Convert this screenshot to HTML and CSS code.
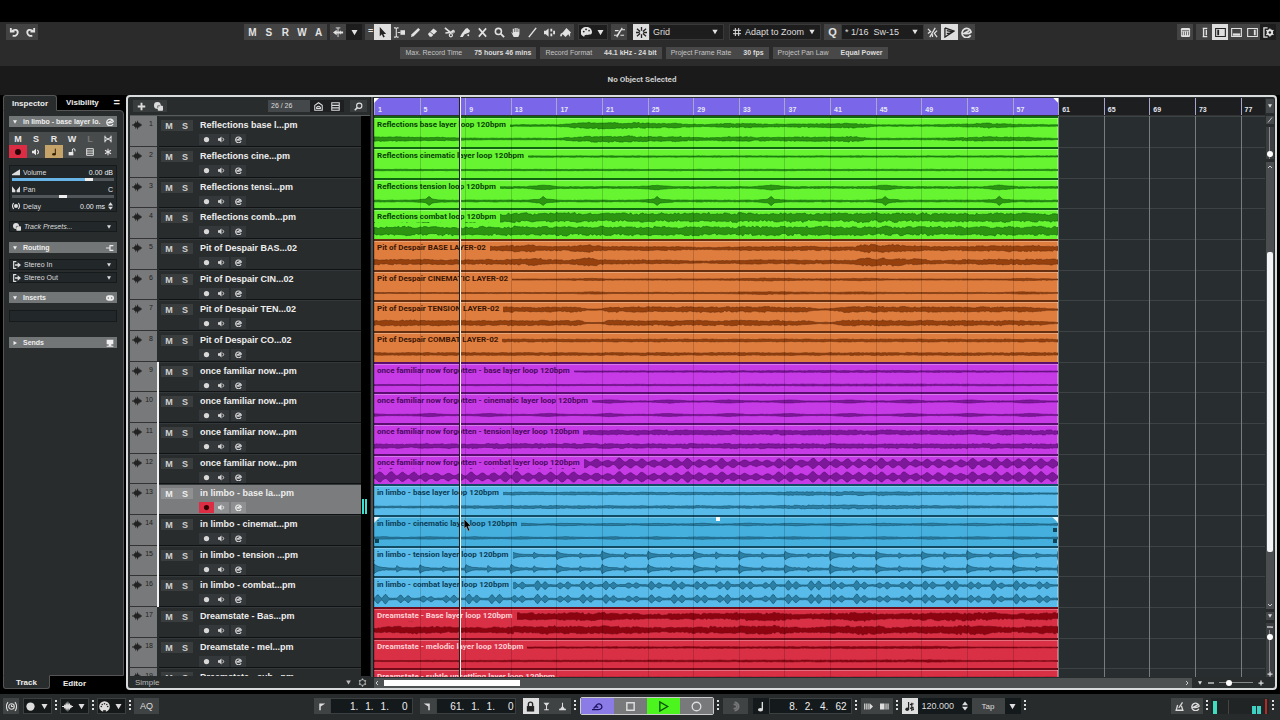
FILE: index.html
```html
<!DOCTYPE html>
<html lang="en">
<head>
<meta charset="utf-8">
<title>Project</title>
<link rel="stylesheet" href="styles.css">
</head>
<body>
<svg class="defs" aria-hidden="true">
  <symbol id="undo" viewBox="0 0 12 12"><path d="M2 1v4h4" fill="none" stroke="currentColor" stroke-width="2"/><path d="M3 4.500C6 2 10 3 9.500 6.500 9 9.500 6 10 4 9.500" fill="none" stroke="currentColor" stroke-width="2"/></symbol>
  <symbol id="redo" viewBox="0 0 12 12"><path d="M10 1v4H6" fill="none" stroke="currentColor" stroke-width="2"/><path d="M9 4.500C6 2 2 3 2.500 6.500 3 9.500 6 10 8 9.500" fill="none" stroke="currentColor" stroke-width="2"/></symbol>
  <symbol id="follow" viewBox="0 0 12 12"><path d="M0 6l4-3v2h7v2H4v2z"/><path d="M3 1h5M5.500 1v10M8 4v4" fill="none" stroke="currentColor"/></symbol>
  <symbol id="down" viewBox="0 0 12 12"><path d="M2 2.500h8L6 9.500z"/></symbol>
  <symbol id="right" viewBox="0 0 12 12"><path d="M3 2v8l7-4z"/></symbol>
  <symbol id="arrow" viewBox="0 0 12 12"><path d="M3 0v10l2.300-2 1.500 3.500 1.700-.8L7 7.500h3z"/></symbol>
  <symbol id="range" viewBox="0 0 12 12"><path d="M0 1h1.500l1 .8 1-.8H5M2.500 2v8M0 11h1.500l1-.8 1 .8H5" fill="none" stroke="currentColor" stroke-width="1.200"/><path d="M7 3.500h5v5H7z"/><path d="M4 6h3" stroke="currentColor"/></symbol>
  <symbol id="pencil" viewBox="0 0 12 12"><path d="M1 11l.8-3L9 1l2 2-7 7z"/></symbol>
  <symbol id="eraser" viewBox="0 0 12 12"><path d="M1 7.500L7 1.500l4 3-6 6H3z"/><path d="M3.500 5.500l4 3" stroke="#444"/></symbol>
  <symbol id="scissors" viewBox="0 0 12 12"><path d="M1 1l6 5M1.500 6.500L7 6l4-2" fill="none" stroke="currentColor" stroke-width="1.800"/><circle cx="7.500" cy="9" r="1.700" fill="none" stroke="currentColor" stroke-width="1.300"/><circle cx="10" cy="5" r="1.500" fill="none" stroke="currentColor"/></symbol>
  <symbol id="glue" viewBox="0 0 12 12"><path d="M0 11l2-4 4-5 2-1 3 3-1 2-5 2-2 3z"/><circle cx="9" cy="9" r="1"/></symbol>
  <symbol id="cross" viewBox="0 0 12 12"><path d="M2 1.500l8 9M10 1.500l-8 9" stroke="currentColor" stroke-width="1.800"/></symbol>
  <symbol id="glass" viewBox="0 0 12 12"><circle cx="4.800" cy="4.800" r="3.300" fill="none" stroke="currentColor" stroke-width="1.700"/><path d="M7.500 7.500L11 11" stroke="currentColor" stroke-width="2"/></symbol>
  <symbol id="glassl" viewBox="0 0 12 12"><circle cx="7" cy="5" r="3.500" fill="none" stroke="currentColor" stroke-width="1.500"/><path d="M4.500 7.500L1 11" stroke="currentColor" stroke-width="2"/></symbol>
  <symbol id="hand" viewBox="0 0 12 12"><path d="M1 5l2 2V2h1.300v3.500h.7V1h1.300v4.500H7V1h1.300v4.500H9V2h1.300v6L9 11H4z"/></symbol>
  <symbol id="line" viewBox="0 0 12 12"><path d="M2 11l8-10" stroke="currentColor" stroke-width="1.600"/></symbol>
  <symbol id="audition" viewBox="0 0 12 12"><path d="M0 4h2l3-2.500v9L2 8H0zM7 2h2v3H7zM7 7h2v3H7zM10 4h2v4h-2z"/></symbol>
  <symbol id="bucket" viewBox="0 0 12 12"><path d="M0 10q0-3 3-4l4-5 5 5-1 1v4L9 8l-3 3-3-3q-1 0-1 2z"/></symbol>
  <symbol id="palette" viewBox="0 0 12 12"><path d="M6 0a6 5.500 0 1 0-1 11c2 0 1-2 2.500-2.500S12 9 12 5.500 9 0 6 0z"/><circle cx="3" cy="5" r="1" fill="#222"/><circle cx="5.500" cy="2.500" r="1" fill="#222"/><circle cx="6" cy="11" r="2.600" fill="#222"/><circle cx="8.800" cy="4" r=".9" fill="#222"/></symbol>
  <symbol id="curve" viewBox="0 0 12 12"><path d="M0 9h3c2 0 3-6 5-6h4M1 4h4M7 9h4M3 11L9 1" fill="none" stroke="currentColor" stroke-width="1.300"/></symbol>
  <symbol id="snap" viewBox="0 0 12 12"><path d="M6 0v4M6 8v4M1 2l3.500 3M11 2L7.500 5M1 10l3.500-3M11 10L7.500 7M0 6h4M8 6h4" fill="none" stroke="currentColor" stroke-width="1.400"/></symbol>
  <symbol id="hash" viewBox="0 0 12 12"><path d="M3.500 0v12M8.500 0v12M0 3.500h12M0 8.500h12" fill="none" stroke="currentColor" stroke-width="1.500"/></symbol>
  <symbol id="iter" viewBox="0 0 12 12"><path d="M1 2l3 3-3 2M3 11L9 1M11 4L8 7l3 4M6 8v3" fill="none" stroke="currentColor" stroke-width="1.400"/></symbol>
  <symbol id="warp" viewBox="0 0 12 12"><path d="M1 1v10l10-6.500L1 1M3 4l5 1-3 3M3 7h3" fill="none" stroke="currentColor" stroke-width="1.400"/></symbol>
  <symbol id="edit" viewBox="0 0 12 12"><path d="M10.500 9A5 5 0 1 1 11 5.500C9.500 7 6 7.500 3.200 7L9 3.800" fill="none" stroke="currentColor" stroke-width="1.800"/></symbol>
  <symbol id="keys" viewBox="0 0 12 12"><rect x="1" y="1" width="10" height="10" rx="1.500"/><path d="M2.500 5v4M4.800 5v4M7.100 5v4M9.400 5v4M2 4h8" stroke="#444" stroke-width=".8"/></symbol>
  <symbol id="zl" viewBox="0 0 12 12"><path d="M4 1.500h5M4 10.500h5M5 1v10M8 3v6" fill="none" stroke="currentColor" stroke-width="1.500"/></symbol>
  <symbol id="pl" viewBox="0 0 12 12"><path d="M.7 1.700h10.600v8.600H.7z" fill="none" stroke="currentColor" stroke-width="1.200"/><path d="M2.500 3h2v6h-2z"/></symbol>
  <symbol id="pb" viewBox="0 0 12 12"><path d="M.7 1.700h10.600v8.600H.7z" fill="none" stroke="currentColor" stroke-width="1.200"/><path d="M2 7h8v2.500H2z"/></symbol>
  <symbol id="pr" viewBox="0 0 12 12"><path d="M.7 1.700h10.600v8.600H.7z" fill="none" stroke="currentColor" stroke-width="1.200"/><path d="M7.500 3h2v6h-2z"/></symbol>
  <symbol id="setup" viewBox="0 0 12 12"><path d="M5 1H1v10h4" fill="none" stroke="currentColor" stroke-width="1.400"/><circle cx="7.500" cy="6" r="2.500" fill="none" stroke="currentColor" stroke-width="2"/><path d="M7.500 1.500v9M3.500 3.500l8 5M3.500 8.500l8-5" stroke="currentColor" stroke-width="1.200"/><circle cx="7.500" cy="6" r="1.300" fill="#222"/></symbol>
  <symbol id="gear" viewBox="0 0 12 12"><circle cx="6" cy="6" r="3.800" fill="none" stroke="currentColor" stroke-width="1.200"/><path d="M6 .5v2M6 9.500v2M1.300 3.300l1.700 1M9 7.800l1.700 1M1.300 8.800L3 7.800M9 4.300l1.700-1" stroke="currentColor" stroke-width="1.600"/></symbol>
  <symbol id="wave" viewBox="0 0 12 12"><path d="M0 5.500h2l.7-2 .8 1L4.500 1l1 3L6.500 0l1 4 .8-2 .9 2.500.8-.5.700 1.500H12v1h-1.300L10 8l-.8-.5L8.300 10l-.8-2-1 4-1-4-1 3-1-3.500-.8 1-.7-2H0z"/></symbol>
  <symbol id="dot" viewBox="0 0 12 12"><circle cx="6" cy="6" r="4.500"/></symbol>
  <symbol id="mon" viewBox="0 0 12 12"><path d="M0 4h2.500L6 1v10L2.500 8H0z"/><path d="M8 3q3.500 3 0 6" fill="none" stroke="currentColor" stroke-width="1.700"/></symbol>
  <symbol id="note" viewBox="0 0 12 12"><path d="M8 1v8" stroke="currentColor" stroke-width="1.500"/><ellipse cx="6" cy="9.500" rx="2.800" ry="1.900"/></symbol>
  <symbol id="unlock" viewBox="0 0 12 12"><path d="M1 6h7v5H1z"/><path d="M6.500 6V3a2 2 0 0 1 4 0v2" fill="none" stroke="currentColor" stroke-width="1.500"/></symbol>
  <symbol id="lock" viewBox="0 0 12 12"><path d="M2 5.500h8V11.500H2z"/><path d="M3.700 6V3.500a2.300 2.300 0 0 1 4.600 0V6" fill="none" stroke="currentColor" stroke-width="1.500"/></symbol>
  <symbol id="rows" viewBox="0 0 12 12"><path d="M1 1h10v10H1zM1 4.500h10M1 7.800h10" fill="none" stroke="currentColor" stroke-width="1.400"/></symbol>
  <symbol id="star" viewBox="0 0 12 12"><path d="M6 1v10M1.500 3.500l9 5M1.500 8.500l9-5" stroke="currentColor" stroke-width="1.600"/></symbol>
  <symbol id="bow" viewBox="0 0 12 12"><path d="M1.500 1v10M10.500 1v10M1 3l5 3-5 3M11 3L6 6l5 3" fill="none" stroke="currentColor" stroke-width="1.500"/></symbol>
  <symbol id="ramp" viewBox="0 0 12 12"><path d="M0 11h12V2L0 9.500z"/></symbol>
  <symbol id="pan" viewBox="0 0 12 12"><path d="M0 2l5 6v3H0zM12 2L7 8v3h5z"/></symbol>
  <symbol id="delay" viewBox="0 0 12 12"><circle cx="6" cy="6" r="3"/><path d="M2.500 1.500Q-1 6 2.500 10.500M9.500 1.500Q13 6 9.500 10.500" fill="none" stroke="currentColor" stroke-width="1.700"/></symbol>
  <symbol id="blob" viewBox="0 0 12 12"><circle cx="4.500" cy="4.500" r="4.500"/><rect x="5" y="5" width="7" height="6.500" rx="1"/><path d="M5 8V5h3" fill="none" stroke="#333" stroke-width=".8"/></symbol>
  <symbol id="inp" viewBox="0 0 12 12"><path d="M5 1H1v10h4" fill="none" stroke="currentColor" stroke-width="1.800"/><path d="M3 5h4V2l5 4-5 4V7H3z"/></symbol>
  <symbol id="route" viewBox="0 0 12 12"><path d="M11 2.500H6V9.500h5M0 6h6" fill="none" stroke="currentColor" stroke-width="1.800"/></symbol>
  <symbol id="ins" viewBox="0 0 12 12"><rect x="0" y="2" width="12" height="8" rx="4"/><circle cx="3.500" cy="6" r="1.200" fill="#777"/><circle cx="8.500" cy="6" r="1.200" fill="#777"/></symbol>
  <symbol id="send" viewBox="0 0 12 12"><path d="M1 1h10v7H1zM4 8h4v2h3v1.500H1V10h3z"/></symbol>
  <symbol id="plus" viewBox="0 0 12 12"><path d="M6 1v10M1 6h10" stroke="currentColor" stroke-width="2.500"/></symbol>
  <symbol id="minus" viewBox="0 0 12 12"><path d="M0 6h12" stroke="currentColor" stroke-width="2.500"/></symbol>
  <symbol id="home" viewBox="0 0 12 12"><path d="M1 4.500L6 1l5 3.500V11H1zM3.500 8.500V7q2.500-2.500 5 0v1.500z" fill="none" stroke="currentColor" stroke-width="1.400"/></symbol>
  <symbol id="clock" viewBox="0 0 12 12"><circle cx="6" cy="6" r="3" fill="none" stroke="currentColor" stroke-width="1.200"/><path d="M6 4v2h2M2.200 1.200q-3.500 4.800 0 9.600M9.800 1.200q3.500 4.800 0 9.600" fill="none" stroke="currentColor" stroke-width="1.200"/></symbol>
  <symbol id="midi" viewBox="0 0 12 12"><circle cx="6" cy="6" r="5.800"/><path d="M4.500 10h3v2h-3z" fill="#222"/><circle cx="2.500" cy="6" r=".9" fill="#222"/><circle cx="9.500" cy="6" r=".9" fill="#222"/><circle cx="6" cy="3" r=".9" fill="#222"/><circle cx="3.500" cy="3.700" r=".8" fill="#222"/><circle cx="8.500" cy="3.700" r=".8" fill="#222"/></symbol>
  <symbol id="locl" viewBox="0 0 12 12"><path d="M3 2h8L5 6v5H3z"/></symbol>
  <symbol id="locr" viewBox="0 0 12 12"><path d="M9 2H1l6 4v5h2z"/></symbol>
  <symbol id="pin" viewBox="0 0 12 12"><path d="M2 1h8L6 5.500zM5.300 5h1.400v5H5.300zM3 9.500h6V11H3z"/></symbol>
  <symbol id="pout" viewBox="0 0 12 12"><path d="M5.300 1h1.400v5H5.300zM6 5l3 4h1.500v2h-9V9H3z"/></symbol>
  <symbol id="cycle" viewBox="0 0 14 12"><path d="M0 10h8c4 0 5-2.500 4.500-4.500C11.500 2 7 2 5.500 4.500L4.500 7M2 8.500l2.500-2.500 3.500 1" fill="none" stroke="currentColor" stroke-width="1.600"/></symbol>
  <symbol id="stop" viewBox="0 0 12 12"><path d="M2 2h8v8H2z" fill="none" stroke="currentColor" stroke-width="1.600"/></symbol>
  <symbol id="play" viewBox="0 0 12 12"><path d="M2 1v10l8.500-5z" fill="none" stroke="currentColor" stroke-width="1.500"/></symbol>
  <symbol id="rec" viewBox="0 0 12 12"><circle cx="6" cy="6" r="4.700" fill="none" stroke="currentColor" stroke-width="1.500"/></symbol>
  <symbol id="jog" viewBox="0 0 12 12"><path d="M5 1.500a4.500 4.500 0 1 1 0 9M4 4a2.300 2.300 0 1 1 0 4" fill="none" stroke="currentColor" stroke-width="1.800"/></symbol>
  <symbol id="nud1" viewBox="0 0 12 12"><path d="M1 2v8M3.800 2v8M6.600 2v8" stroke="currentColor" stroke-width="1.600"/><path d="M8 2l4 4-4 4z"/></symbol>
  <symbol id="nud2" viewBox="0 0 12 12"><path d="M0 2h6v8H0zM7.300 2h1.500v8H7.300zM10 2h1.500v8H10z"/></symbol>
  <symbol id="notes" viewBox="0 0 12 12"><path d="M5 1v8M8.500 2v9M6.500 4l4-1M6.500 8l4-1" stroke="currentColor" stroke-width="1.300"/><circle cx="3.500" cy="9" r="2"/><circle cx="10" cy="9" r="1"/></symbol>
  <symbol id="updn" viewBox="0 0 8 12"><path d="M4 0l4 5H0zM4 12l4-5H0z"/></symbol>
  <symbol id="metro" viewBox="0 0 12 12"><path d="M3.500 4L1.500 11h9l-2-6M5 8l5-7.500" fill="none" stroke="currentColor" stroke-width="1.700"/></symbol>
  <symbol id="chu" viewBox="0 0 12 12"><path d="M2 8l4-4 4 4" fill="none" stroke="currentColor" stroke-width="1.800"/></symbol>
  <symbol id="chd" viewBox="0 0 12 12"><path d="M2 4l4 4 4-4" fill="none" stroke="currentColor" stroke-width="1.800"/></symbol>
  <symbol id="chl" viewBox="0 0 12 12"><path d="M8 2L4 6l4 4" fill="none" stroke="currentColor" stroke-width="1.800"/></symbol>
  <symbol id="chr" viewBox="0 0 12 12"><path d="M4 2l4 4-4 4" fill="none" stroke="currentColor" stroke-width="1.800"/></symbol>
</svg>

<header class="toolbar">
  <div class="tools">
    <div class="group"><button aria-label="Undo"><svg><use href="#undo"/></svg></button><button aria-label="Redo"><svg><use href="#redo"/></svg></button></div>
    <div class="tools-main">
      <div class="group letters"><button>M</button><button>S</button><button>R</button><button>W</button><button>A</button></div>
      <div class="group"><button aria-label="Auto-scroll"><svg><use href="#follow"/></svg></button><button class="dark" aria-label="Auto-scroll options"><svg class="tiny"><use href="#down"/></svg></button></div>
      <div class="group"><span class="grip">=</span>
        <div class="toolset">
          <button class="on" aria-label="Select"><svg><use href="#arrow"/></svg></button><button aria-label="Range"><svg><use href="#range"/></svg></button><button aria-label="Draw"><svg><use href="#pencil"/></svg></button><button aria-label="Erase"><svg><use href="#eraser"/></svg></button><button aria-label="Split"><svg><use href="#scissors"/></svg></button><button aria-label="Glue"><svg><use href="#glue"/></svg></button><button aria-label="Mute"><svg><use href="#cross"/></svg></button><button aria-label="Zoom"><svg><use href="#glass"/></svg></button><button aria-label="Comp"><svg><use href="#hand"/></svg></button><button aria-label="Line"><svg><use href="#line"/></svg></button><button aria-label="Play"><svg><use href="#audition"/></svg></button><button aria-label="Color"><svg><use href="#bucket"/></svg></button>
        </div>
      </div>
      <div class="group dark color"><button aria-label="Palette"><svg><use href="#palette"/></svg></button><button aria-label="Palette options"><svg class="tiny"><use href="#down"/></svg></button></div>
      <div class="group"><button aria-label="Crossfade"><svg><use href="#curve"/></svg></button></div>
      <div class="group snap"><button class="on" aria-label="Snap"><svg><use href="#snap"/></svg></button><span class="combo c-grid"><select aria-label="Snap type"><option>Grid</option></select><svg class="tiny"><use href="#down"/></svg></span></div>
      <div class="group"><span class="combo c-zoom"><svg class="tiny"><use href="#hash"/></svg><select aria-label="Grid type"><option>Adapt to Zoom</option></select><svg class="tiny"><use href="#down"/></svg></span></div>
      <div class="group quant"><button class="q">Q</button><span class="combo c-q"><select aria-label="Quantize preset"><option>* 1/16&nbsp; Sw-15</option></select><svg class="tiny"><use href="#down"/></svg></span><button aria-label="Iterative"><svg><use href="#iter"/></svg></button><button class="on" aria-label="AudioWarp"><svg><use href="#warp"/></svg></button><button aria-label="Quantize panel"><svg><use href="#edit"/></svg></button></div>
    </div>
    <div class="tools-right">
      <div class="group"><button aria-label="Keyboard"><svg><use href="#keys"/></svg></button></div>
      <div class="group"><button aria-label="Left divider"><svg><use href="#zl"/></svg></button><button class="on" aria-label="Left zone"><svg><use href="#pl"/></svg></button><button aria-label="Lower zone"><svg><use href="#pb"/></svg></button><button aria-label="Right zone"><svg><use href="#pr"/></svg></button><button class="dark" aria-label="Setup"><svg><use href="#setup"/></svg></button></div>
    </div>
  </div>
  <dl class="status">
    <div><dt>Max. Record Time</dt><dd>75 hours 46 mins</dd></div>
    <div><dt>Record Format</dt><dd>44.1 kHz - 24 bit</dd></div>
    <div><dt>Project Frame Rate</dt><dd>30 fps</dd></div>
    <div><dt>Project Pan Law</dt><dd>Equal Power</dd></div>
  </dl>
</header>
<div class="infoline">No Object Selected</div>

<main>
  <aside class="inspector">
    <nav class="tabs top"><button class="active">Inspector</button><button>Visibility</button><span class="menu">=</span></nav>
    <div class="insp-body">
      <h2 class="bar"><svg><use href="#down"/></svg><span>in limbo - base layer lo.</span><svg class="end"><use href="#edit"/></svg></h2>
      <div class="switches">
        <button>M</button><button>S</button><button>R</button><button>W</button><button class="off">L</button><button aria-label="Bypass"><svg><use href="#bow"/></svg></button>
        <button class="rec" aria-label="Record enable"><svg><use href="#dot"/></svg></button><button aria-label="Monitor"><svg><use href="#mon"/></svg></button><button class="tan" aria-label="Musical timebase"><svg><use href="#note"/></svg></button><button aria-label="Lock"><svg><use href="#unlock"/></svg></button><button aria-label="Lanes"><svg><use href="#rows"/></svg></button><button aria-label="Freeze"><svg><use href="#star"/></svg></button>
      </div>
      <div class="faders">
        <div class="line"><svg><use href="#ramp"/></svg><label for="vol">Volume</label><b>0.00 dB</b></div>
        <input id="vol" class="fader vol" type="range" value="78">
        <div class="line"><svg><use href="#pan"/></svg><label for="panr">Pan</label><b>C</b></div>
        <input id="panr" class="fader" type="range" value="50">
        <div class="line"><svg><use href="#delay"/></svg><span>Delay</span><b>0.00 ms</b><svg><use href="#updn"/></svg></div>
      </div>
      <div class="slot presets"><svg><use href="#blob"/></svg><i>Track Presets...</i><svg><use href="#down"/></svg></div>
      <h2 class="bar"><svg><use href="#down"/></svg><span>Routing</span><svg class="end"><use href="#route"/></svg></h2>
      <div class="routes">
        <div class="slot"><svg><use href="#inp"/></svg><span>Stereo In</span><svg><use href="#down"/></svg></div>
        <div class="slot"><svg><use href="#inp"/></svg><span>Stereo Out</span><svg><use href="#down"/></svg></div>
      </div>
      <h2 class="bar"><svg><use href="#down"/></svg><span>Inserts</span><svg class="end"><use href="#ins"/></svg></h2>
      <div class="slot empty"></div>
      <h2 class="bar"><svg><use href="#right"/></svg><span>Sends</span><svg class="end"><use href="#send"/></svg></h2>
    </div>
    <nav class="tabs bottom"><button class="active">Track</button><button>Editor</button></nav>
  </aside>

  <section class="project">
    <div class="tracks">
      <div class="tracks-head">
        <button aria-label="Add track"><svg><use href="#plus"/></svg></button><button aria-label="Track preset"><svg><use href="#blob"/></svg></button>
        <span class="count">26 / 26</span>
        <button class="dark" aria-label="Agents"><svg><use href="#home"/></svg></button><button class="dark" aria-label="Configurations"><svg><use href="#rows"/></svg></button>
        <button class="find" aria-label="Find"><svg><use href="#glassl"/></svg></button>
      </div>
      <ol class="track-list" id="trackList"></ol>
      <div class="tracks-foot"><span>Simple</span><svg><use href="#down"/></svg><svg class="g"><use href="#gear"/></svg></div>
    </div>
    <div class="divider"></div>
    <div class="arrange">
      <div class="ruler" id="timeRuler"></div>
      <div class="lanes" id="clipLanes"></div>
      <div class="playhead"></div>
      <svg class="pointer" viewBox="0 0 12 16"><path d="M1 1v11l2.500-2 2 5 2-1-2-4.500H9z" fill="#000" stroke="#bbb" stroke-width=".7"/></svg>
    </div>
    <div class="vscroll">
      <button aria-label="Ruler options"><svg><use href="#down"/></svg></button>
      <button class="short" aria-label="Edit"><svg><use href="#line"/></svg></button>
      <div class="vzoom a"><input type="range" value="6" aria-label="Waveform zoom"></div>
      <div class="vbar"><svg><use href="#chu"/></svg><span class="vthumb"></span><svg><use href="#chd"/></svg></div>
      <button class="short" aria-label="Height options"><svg><use href="#down"/></svg></button>
      <div class="vzoom b"><svg><use href="#minus"/></svg><input type="range" value="90" aria-label="Vertical zoom"><svg><use href="#plus"/></svg></div>
    </div>
    <div class="hscroll">
      <div class="hbar"><svg><use href="#chl"/></svg><span class="hthumb"></span><svg><use href="#chr"/></svg></div>
      <svg><use href="#down"/></svg><svg><use href="#minus"/></svg><input type="range" value="26" aria-label="Horizontal zoom"><svg><use href="#plus"/></svg>
    </div>
  </section>
</main>

<footer class="transport">
  <div class="tgroup modes">
    <button aria-label="Constrain delay"><svg><use href="#clock"/></svg></button>
    <div class="pair"><button aria-label="Record mode"><svg><use href="#dot"/></svg></button><button aria-label="Record options"><svg class="tiny"><use href="#down"/></svg></button></div><i class="dots"></i>
    <div class="pair"><button aria-label="Audio mode"><svg><use href="#wave"/></svg></button><button aria-label="Audio options"><svg class="tiny"><use href="#down"/></svg></button></div><i class="dots"></i>
    <div class="pair"><button aria-label="MIDI mode"><svg><use href="#midi"/></svg></button><button aria-label="MIDI options"><svg class="tiny"><use href="#down"/></svg></button></div><i class="dots"></i>
    <button class="aq">AQ</button>
  </div>
  <div class="tgroup center">
    <div class="cell"><button aria-label="Left locator"><svg class="tiny"><use href="#locl"/></svg></button><output class="pos"><span>1.</span><span>1.</span><span>1.</span><span class="tick">0</span></output></div>
    <div class="cell loc-r"><button aria-label="Right locator"><svg class="tiny"><use href="#locr"/></svg></button><output class="pos"><span>61.</span><span>1.</span><span>1.</span><span class="tick">0</span></output></div>
    <div class="cell"><button class="on" aria-label="Lock punch"><svg><use href="#lock"/></svg></button><button aria-label="Punch in"><svg class="tiny"><use href="#pin"/></svg></button><button aria-label="Punch out"><svg class="tiny"><use href="#pout"/></svg></button></div><i class="dots"></i>
    <div class="deck"><button class="cyc" aria-label="Cycle"><svg><use href="#cycle"/></svg></button><button aria-label="Stop"><svg><use href="#stop"/></svg></button><button class="go" aria-label="Play"><svg><use href="#play"/></svg></button><button aria-label="Record"><svg><use href="#rec"/></svg></button></div><i class="dots"></i>
    <button class="jog" aria-label="Shuttle"><svg><use href="#jog"/></svg></button>
    <div class="cell field"><button aria-label="Time format"><svg><use href="#note"/></svg></button><output class="pos"><span>8.</span><span>2.</span><span>4.</span><span>62</span></output></div><i class="dots"></i>
    <div class="cell"><button aria-label="Nudge left"><svg class="tiny"><use href="#nud1"/></svg></button><button aria-label="Nudge right"><svg class="tiny"><use href="#nud2"/></svg></button></div><i class="dots"></i>
    <div class="cell"><button class="on" aria-label="Tempo track"><svg><use href="#notes"/></svg></button><span class="tempo"><input value="120.000" aria-label="Tempo"><svg><use href="#updn"/></svg></span><button class="tap">Tap</button><button class="dark" aria-label="Tap options"><svg class="tiny"><use href="#down"/></svg></button></div><i class="dots"></i>
  </div>
  <div class="tgroup">
    <div class="cell"><button aria-label="Metronome"><svg class="tiny"><use href="#metro"/></svg></button><button aria-label="Metronome setup"><svg class="tiny"><use href="#edit"/></svg></button></div><i class="dots"></i>
    <div class="meters"><span class="m1"></span><span class="m2"></span><span class="m3"></span><span class="m3"></span><span class="m4"></span></div><i class="dots"></i>
  </div>
</footer>
<script src="app.js"></script>
</body>
</html>
```

FILE: styles.css
```css
* { box-sizing: border-box; }
body { margin: 0; height: 100vh; padding-top: 22px; display: flex; flex-direction: column; overflow: hidden; background: #000; color: #ddd; font: 7px "Liberation Sans", Arial, sans-serif; }
.defs { display: none; }
svg { fill: currentColor; width: 11px; height: 11px; flex: none; display: block; }
svg.tiny { width: 9px; height: 9px; }
button { all: unset; box-sizing: border-box; display: flex; align-items: center; justify-content: center; }
h2, dl, dd, ol { margin: 0; padding: 0; list-style: none; }
input { min-width: 0; margin: 0; }

/* top toolbar */
.toolbar { background: #2b2b2b; padding: 2px 4px 7px 6px; }
.tools { display: flex; justify-content: space-between; }
.tools-main, .tools-right { display: flex; gap: 3px; }
.tools-main { margin-left: 4px; }
.group { display: flex; height: 16px; background: #434343; color: #e2e2e2; }
.group button { width: 16px; }
.group.quant button { width: 17px; }
.group button.on, .cell .on { background: #dedede; color: #222; }
.dark, .group button.dark { background: #1d1d1d; }
.letters { width: 83px; }
.letters button { flex: 1; font-size: 10px; font-weight: bold; }
.grip { width: 9px; font-size: 9px; font-weight: bold; line-height: 15px; padding-left: 3px; }
.toolset { display: flex; width: 200px; }
.toolset button { flex: 1; }
.color { border: 1px solid #393939; margin-left: 1px; }
.color button { width: 14px; }
.snap { margin: 0 2px 0 3px; }
.q { font-size: 11px; font-weight: bold; }
.combo { display: flex; align-items: center; background: #1d1d1d; border: 1px solid #393939; padding: 0 4px 0 3px; }
.combo select { all: unset; flex: 1; font-size: 9px; color: #ddd; white-space: nowrap; }
.combo svg { width: 8px; height: 8px; }
.c-grid { width: 75px; }
.c-zoom { width: 92px; }
.c-zoom select { padding-left: 4px; }
.c-q { width: 83px; }
.status { display: flex; justify-content: center; gap: 4px; margin: 7px 0 0 6px; }
.status div { display: flex; gap: 12px; padding: 0 5px; height: 12px; line-height: 12px; background: #484848; color: #c4c4c4; }
.status dd { font-weight: bold; color: #dcdcdc; }
.infoline { height: 29px; flex: none; background: #1a1a1a; display: flex; align-items: center; justify-content: center; padding: 0 0 3px 4px; font: bold 8px Roboto, sans-serif; color: #ccc; }

main { flex: 1; min-height: 0; display: flex; gap: 2px; padding: 0 3px 4px; }

/* inspector */
.inspector { flex: none; width: 121px; display: flex; flex-direction: column; }
.tabs { display: flex; font-weight: bold; font-size: 8px; color: #eee; }
.tabs button { padding: 0 8px; height: 14px; border: 1px solid #555; border-radius: 3px 3px 0 0; border-color: transparent; }
.tabs .active { background: #292c2d; border-color: #555; border-bottom-color: #292c2d; margin-bottom: -1px; z-index: 1; }
.tabs.top .active { height: 16px; }
.tabs .menu { margin: 1px 4px 0 auto; font-size: 11px; }
.tabs.bottom .active { margin: -1px 0 0; border-color: #555; border-top-color: #292c2d; border-radius: 0 0 3px 3px; }
.tabs.bottom button { padding: 0 12px; }
.insp-body { flex: 1; background: #292c2d; border: 1px solid #555; border-radius: 0 4px 0 0; padding: 5px 6px 0 5px; }
.bar { display: flex; align-items: center; gap: 5px; height: 11px; padding: 0 3px 0 3px; background: #737677; color: #eee; font-size: 7px; }
.bar svg { width: 6px; height: 6px; }
.bar span { flex: 1; }
.bar .end { width: 8px; height: 8px; }
.switches { display: grid; grid-template-columns: repeat(6, 1fr); margin-top: 5px; background: #484b4c; }
.switches button { height: 13px; font-size: 9px; font-weight: bold; color: #e8e8e8; }
.switches svg { width: 8px; height: 8px; }
.switches .off { color: #777; }
.switches .rec { background: #dc2d45; color: #2a0508; }
.switches .tan { background: #c6a368; color: #332200; }
.faders { margin-top: 7px; padding: 1px 2px 0; border: 1px solid #171a1b; background: #22272a; }
.line { display: flex; align-items: center; gap: 3px; height: 10px; padding: 0 1px 0 0; }
.line svg { width: 8px; height: 8px; }
.line b { margin-left: auto; font-weight: normal; color: #eee; }
.line svg:last-child { width: 5px; }
.fader { appearance: none; display: block; width: 100%; height: 3px; background: #50565a; margin: 1px 0 3px; }
.fader.vol { background: linear-gradient(90deg, #68b4e6 76%, #50565a 76%); }
.slot { display: flex; align-items: center; gap: 3px; height: 11px; padding: 0 4px 0 3px; border: 1px solid #171a1b; background: #22272a; color: #ddd; }
.slot svg { width: 8px; height: 8px; }
.slot svg:last-child { width: 6px; height: 6px; margin-left: auto; }
.presets { margin: 9px 0 10px; }
.routes { display: grid; gap: 2px; margin: 6px 0 9px; }
.slot.empty { height: 12px; margin: 7px 0 15px; }

/* project window */
.project { flex: 1; min-width: 0; min-height: 0; border: 2px solid #d9dcdc; border-radius: 4px; background: #292c2d; display: grid; grid-template-columns: 242px 4px 1fr 10px; grid-template-rows: 1fr 11px; overflow: hidden; }
.tracks { grid-row: 1 / 3; display: flex; flex-direction: column; min-height: 0; padding-left: 2px; }
.tracks-head { display: flex; align-items: center; height: 19px; padding: 0 3px; border-bottom: 1px solid #585b5c; flex: none; }
.tracks-head button { width: 17px; height: 12px; background: #393c3d; }
.tracks-head svg { width: 9px; height: 9px; }
.tracks-head .count { width: 42px; margin-left: auto; height: 12px; line-height: 12px; padding-left: 3px; background: #45484a; }
.tracks-head .find { margin-left: 6px; }
.tracks-head .dark { background: #1d1f20; }
.track-list { flex: 1; min-height: 0; overflow: hidden; background: linear-gradient(90deg, transparent 231px, #000 231px); }
.track { display: grid; grid-template-columns: 27px 2px 1fr 8px; height: 31px; padding-right: 1px; }
.track:nth-child(3n), .lane:nth-child(3n) { height: 30px; }
.num { display: flex; justify-content: space-between; padding: 4px 4px 0 2px; background: #77797a; border-bottom: 1px solid #333; color: #222; }
.num svg { width: 10px; height: 10px; }
.linked .edge { background: #f0f0f0; }
.strip { display: grid; grid-template-columns: 32px 1fr; gap: 3px 7px; padding: 3px 2px 0; align-content: start; border-bottom: 1px solid #101213; border-top: 1px solid #33383a; }
.strip .ms { display: flex; height: 11px; background: #3a3d3e; font-size: 9px; font-weight: bold; color: #d0d0d0; }
.ms button { flex: 1; }
.name { font-size: 9px; font-weight: bold; line-height: 11px; color: #eee; white-space: nowrap; }
.strip .acts { grid-column: 2; display: flex; gap: 2px; height: 11px; margin-left: -1px; }
.acts button { width: 15px; background: #35383a; color: #d8d8d8; }
.acts svg { width: 7px; height: 7px; }
.acts span { display: flex; }
.meter { background: #000; display: flex; gap: 1px; align-items: flex-end; padding: 0 2px 1px 1px; }
.meter i { flex: 1; height: 15px; background: #3ce0d0; }
.selected .strip { background: #7a7c7d; }
.selected .ms, .selected .acts button { background: #8e9091; color: #eee; }
.selected .acts button.arm { background: #dc2d45; color: #300; }
.tracks-foot { display: flex; align-items: center; gap: 6px; height: 12px; padding: 0 3px 0 5px; flex: none; color: #bbb; }
.tracks-foot span { margin-right: auto; font-size: 8px; }
.tracks-foot svg { width: 7px; height: 7px; }
.tracks-foot svg.g { width: 9px; height: 9px; }
.divider { background: #4c4f50; border: solid #1b1d1e; border-width: 0 1px; }

/* timeline: --part is the loop length, --step is four bars */
.arrange { --part: 76.800%; --step: calc(var(--part) / 15); position: relative; min-width: 0; min-height: 0; overflow: hidden; display: flex; flex-direction: column; }
.ruler { display: flex; flex: none; height: 18px; margin-top: 1px; background: linear-gradient(90deg, #7966e8 var(--part), #1c1e20 var(--part)); border-bottom: 1px solid #333; position: relative; }
.ruler span { flex: 0 0 var(--step); border-left: 1px solid #a9a4cf; padding: 8px 0 0 3px; font-weight: bold; color: #e6e6f2; overflow: hidden; }
.ruler .corner { position: absolute; top: 0; left: 0; width: 5px; height: 5px; background: #fff; clip-path: polygon(0 0, 100% 0, 0 100%); }
.ruler .corner.r { left: calc(var(--part) - 5px); clip-path: polygon(0 0, 100% 0, 100% 100%); }
.lanes { flex: 1; min-height: 0; overflow: hidden; background: #282d2f; position: relative; }
.gridlines { position: absolute; inset: 0; display: flex; pointer-events: none; }
.gridlines i { flex: 0 0 var(--step); border-left: 1px solid rgba(0, 0, 0, .16); }
.gridlines i:nth-child(n+16) { border-left-color: #777c7e; }
.lane { height: 31px; border-top: 1px solid #3d4244; }
.clip { width: var(--part); height: calc(100% + 1px); margin-top: -1px; border-top: 2px solid var(--deep); background: var(--fill); color: var(--ink); box-shadow: inset 0 1px rgba(255, 255, 255, .3), inset -1px 0 rgba(255, 255, 255, .3); position: relative; overflow: hidden; }
.clip svg { width: 100%; height: 28px; }
.clip path { fill: var(--wave); stroke: var(--deep); stroke-width: .6; }
.clip .label { position: absolute; left: 0; top: 1px; height: 11px; padding: 0 4px 0 3px; background: var(--fill); font: bold 8px/11px Roboto, sans-serif; white-space: nowrap; }
.green { --fill: #67f532; --deep: #0f6410; --wave: #2c9411; --ink: #073f05; }
.orange { --fill: #df7d3f; --deep: #663010; --wave: #96400e; --ink: #3a1604; }
.purple { --fill: #c63be6; --deep: #590e70; --wave: #7e189a; --ink: #4a0a5c; }
.blue { --fill: #59bbea; --deep: #124b64; --wave: #2c7fa4; --ink: #0c3c55; }
.blue.picked { --fill: #45afde; }
.red { --fill: #d93046; --deep: #740b18; --wave: #8c0410; --ink: #ffd0d4; }
.knob { position: absolute; width: 4px; height: 4px; background: #0f4358; }
.knob.top { left: 50%; top: 0; background: #fff; }
.knob.b1 { right: 1px; top: 11px; }
.knob.b2 { right: 1px; bottom: 3px; }
.knob.b3 { left: 1px; bottom: 3px; }
.knob.fi, .knob.fo { top: 0; width: 6px; height: 6px; background: #e6f6ff; }
.knob.fi { left: 0; clip-path: polygon(0 0, 100% 0, 0 100%); }
.knob.fo { right: 0; clip-path: polygon(0 0, 100% 0, 100% 100%); }
.playhead { position: absolute; top: 0; bottom: 0; left: 9.500%; width: 2px; background: #f4f4e8; border-left: 1px solid #222; }
.pointer { position: absolute; left: 10%; top: 421px; width: 11px; height: 14px; }

/* scrollbars */
.vscroll { display: flex; flex-direction: column; align-items: center; gap: 3px; padding-top: 2px; min-height: 0; }
.vscroll button { width: 8px; height: 14px; background: #45484a; }
.vscroll .short { height: 8px; flex: none; }
.vscroll svg { width: 6px; height: 6px; }
.vzoom { width: 8px; background: #3c3f41; display: flex; flex-direction: column; align-items: center; }
.vzoom input { appearance: none; writing-mode: vertical-lr; direction: rtl; width: 6px; height: 32px; background: linear-gradient(90deg, transparent 2px, #888 2px, #888 3px, transparent 3px); }
.vzoom.b { padding: 1px 0 0; }
.vzoom.b input { height: 41px; }
input::-webkit-slider-thumb { appearance: none; width: 6px; height: 6px; border-radius: 3px; background: #fff; }
.fader::-webkit-slider-thumb { width: 8px; height: 3px; border-radius: 0; background: #eee; }
.vbar { flex: 1; width: 8px; background: #4b4e50; display: grid; grid-template-rows: 9px 82fr 303fr 48fr 9px; justify-items: center; align-items: center; }
.vthumb { grid-row: 3; width: 6px; height: 100%; border-radius: 2px; background: #f2f4f6; }
.vbar svg:last-child { grid-row: 5; }
.hscroll { grid-column: 3 / 5; display: flex; align-items: center; gap: 5px; padding-right: 11px; }
.hscroll svg { width: 6px; height: 6px; }
.hbar { flex: 1; height: 10px; background: #4e5152; display: grid; grid-template-columns: 10px 137fr 666fr 8px; align-items: center; }
.hthumb { height: 6px; background: #fff; }
.hbar svg:last-child { grid-column: 4; }
.hscroll input { appearance: none; width: 34px; height: 6px; background: linear-gradient(transparent 2px, #888 2px, #888 3px, transparent 3px); }

/* transport */
.transport { flex: none; height: 26px; display: flex; justify-content: space-between; padding: 4px 3px 6px; background: #272b2c; color: #ddd; }
.tgroup { display: flex; height: 16px; }
.transport button { width: 16px; background: #404344; }
.modes > button:first-child { margin-right: 4px; }
.transport .pair { display: flex; width: 29px; border: 1px solid #3c3f40; background: #16191a; }
.transport .pair button { flex: 1; background: none; }
.dots { width: 2px; margin: 2px 3px; background: repeating-linear-gradient(#ddd 0 2px, transparent 2px 4px); }
.transport .aq { width: 25px; font-size: 9px; }
.cell { display: flex; }
.center { margin-left: 12px; }
.center .cell { margin-right: 7px; }
.center .cell:has(+ .dots) { margin-right: 0; }
.center .dots:not(:last-child) { margin-right: 4px; }
.pos { display: flex; gap: 7px; align-items: center; justify-content: flex-end; width: 83px; padding-right: 4px; border: 1px solid #3c3f40; background: #14191b; color: #eee; font-size: 10px; }
.loc-r .pos { width: 80px; padding-right: 1px; }
.tick { padding-left: 6px; }
.deck { display: flex; height: 18px; margin: -1px 0; border: 1px solid #ccc; border-radius: 2px; overflow: hidden; }
.transport .deck button { width: 33px; background: #77797a; }
.transport .deck .cyc { background: #8a7be6; color: #1d1060; }
.transport .deck .go { background: #4cf51e; color: #0a5508; }
.transport .on { background: #dedede; color: #222; }
.transport .jog { width: 25px; margin-right: 5px; color: #777; }
.transport .field button { background: #14191b; }
.tempo { display: flex; align-items: center; width: 54px; padding: 0 4px; background: #14191b; }
.tempo input { all: unset; flex: 1; width: 40px; font-size: 9px; }
.tempo svg { width: 6px; height: 10px; }
.transport .tap { width: 33px; font-size: 8px; }
.transport .cell .dark { background: #14191b; }
.meters { display: flex; align-items: flex-end; gap: 1px; width: 58px; padding: 0 2px; background: #202425; }
.m1 { width: 4px; height: 13px; background: #3fdcc0; }
.m2 { width: 1px; height: 14px; margin: 0 auto 0 10px; background: #444; }
.m3 { width: 4px; height: 8px; background: #3fd0c4; }
.m4 { width: 2px; height: 15px; margin-left: 3px; background: #b32a26; }
```

FILE: app.js
```javascript
const icon = (id) => `<svg><use href="#${id}"/></svg>`;

// env: [position, amplitude] pairs for upper channel; env2 for lower channel (defaults to env)
const tracks = [
  ['Reflections base l...pm', 'Reflections base layer loop 120bpm', 'green', { env: [[0,1],[182,.7],[200,2],[225,2.8],[300,2],[330,1],[360,2],[400,1.2],[480,2],[505,.7],[560,.7],[600,1.5],[613,2.2],[650,1],[684,.7]], env2: [[0,2],[60,1.500],[110,.7],[185,.7],[205,2],[235,2.800],[310,2],[330,1],[360,2],[400,1.500],[480,2.400],[495,.7],[560,.7],[610,2],[660,1.300],[684,.7]] }],
  ['Reflections cine...pm', 'Reflections cinematic layer loop 120bpm', 'green', { env: [[0,.6],[684,.6]] }],
  ['Reflections tensi...pm', 'Reflections tension loop 120bpm', 'green', { env: [[0,.8],[684,.8]], swell: 114 }],
  ['Reflections comb...pm', 'Reflections combat loop 120bpm', 'green', { env: [[0,3.800],[684,3.800]] }],
  ['Pit of Despair BAS...02', 'Pit of Despair BASE LAYER-02', 'orange', { env: [[0,2.300],[120,2],[160,3],[190,1.600],[215,3.500],[235,1.800],[300,1.600],[330,.9],[380,1.800],[480,1.700],[490,3.500],[530,3],[560,1.600],[640,2.600],[684,2.400]] }],
  ['Pit of Despair CIN...02', 'Pit of Despair CINEMATIC LAYER-02', 'orange', { env: [[0,.4],[190,.5],[220,1],[240,.5],[350,.6],[390,1.300],[440,.6],[490,1],[520,.5],[630,.5],[650,1.200],[684,.4]] }],
  ['Pit of Despair TEN...02', 'Pit of Despair TENSION LAYER-02', 'orange', { env: [[0,2.400],[205,2],[213,.6],[228,.6],[235,2.200],[430,2.200],[445,.6],[458,.8],[470,2.500],[660,2],[684,.5]] }],
  ['Pit of Despair CO...02', 'Pit of Despair COMBAT LAYER-02', 'orange', { env: [[0,1.200],[684,1.200]] }],
  ['once familiar now...pm', 'once familiar now forgotten - base layer loop 120bpm', 'purple', { env: [[0,.5],[300,.6],[500,.9],[684,.5]] }],
  ['once familiar now...pm', 'once familiar now forgotten - cinematic layer loop 120bpm', 'purple', { env: [[0,.6],[684,.6]], swell: 60, soft: 1 }],
  ['once familiar now...pm', 'once familiar now forgotten - tension layer loop 120bpm', 'purple', { env: [[0,2],[684,2]] }],
  ['once familiar now...pm', 'once familiar now forgotten - combat layer loop 120bpm', 'purple', { env: [[0,1.300],[684,1.300]], blob: 11.4, size: 4 }],
  ['in limbo - base la...pm', 'in limbo - base layer loop 120bpm', 'blue', { env: [[0,.7],[130,1.200],[400,1],[410,1.500],[500,1.600],[560,1.200],[684,.6]] }],
  ['in limbo - cinemat...pm', 'in limbo - cinematic layer loop 120bpm', 'blue picked', { env: [[0,.6],[684,.6]], swell: 45.6, soft: .6 }],
  ['in limbo - tension ...pm', 'in limbo - tension layer loop 120bpm', 'blue', { env: [[0,.9],[684,.9]], hit: 22.8, size: 4 }],
  ['in limbo - combat...pm', 'in limbo - combat layer loop 120bpm', 'blue', { env: [[0,.8],[684,.8]], blob: 7.6, size: 3.8, gap: true }],
  ['Dreamstate - Bas...pm', 'Dreamstate - Base layer loop 120bpm', 'red', { env: [[0,2.200],[40,3.600],[90,2.300],[140,3],[230,3.600],[280,2.200],[400,3.600],[430,2.200],[490,3.800],[520,2.400],[600,4],[640,2.200],[670,3.800],[684,3]] }],
  ['Dreamstate - mel...pm', 'Dreamstate - melodic layer loop 120bpm', 'red', { env: [[0,.5],[400,.8],[560,1],[600,.5],[684,.4]] }],
  ['Dreamstate - sub...pm', 'Dreamstate - subtle unsettling layer loop 120bpm', 'red', { env: [[0,.4],[684,.4]] }],
];

function noise(n) {
  const v = Math.sin(n * 127.1) * 43758.5453;
  return v - Math.floor(v);
}

function level(env, x) {
  let i = 1;
  while (i < env.length - 1 && env[i][0] < x) i += 1;
  const [x0, a0] = env[i - 1];
  const [x1, a1] = env[i];
  return a0 + (a1 - a0) * (x - x0) / (x1 - x0);
}

function amplitude(shape, channel, x, seed) {
  let a = level(channel && shape.env2 ? shape.env2 : shape.env, x);
  a *= 0.55 + 0.4 * noise(Math.floor(x / 2) + seed) + 0.4 * noise(Math.floor(x / 7) + seed + 50);
  if (shape.swell) {
    const d = Math.abs(((x + shape.swell / 2 - 55) % shape.swell + shape.swell) % shape.swell - shape.swell / 2);
    const peak = shape.soft || (channel ? 1.2 : 1.5);
    a += Math.max(0, peak * (1 - d / 18));
    if (channel && !shape.soft) a += Math.max(0, 2.6 - d * 0.8);
  }
  if (shape.blob) {
    const k = Math.floor(x / shape.blob);
    const on = !shape.gap || k % 3 !== 2;
    const big = shape.size * (0.5 + 0.6 * noise(k + 3));
    if (on) a += big * Math.pow(Math.sin(Math.PI * (x / shape.blob - k)), 2);
  }
  if (shape.hit) {
    const k = Math.floor(x / shape.hit);
    const d = x - k * shape.hit;
    a += shape.size * (k % 2 ? 0.7 : 1) * Math.exp(-d / (k % 2 ? 2 : 4));
  }
  return a;
}

function wavePath(shape, channel, seed) {
  const mid = channel ? 21 : 7.5;
  let top = '';
  let bottom = '';
  for (let x = 0; x <= 684; x += 1) {
    top += `${x ? 'L' : 'M'}${x} ${(mid - amplitude(shape, channel, x, seed)).toFixed(1)}`;
    bottom = `L${x} ${(mid + amplitude(shape, channel, x, seed + 999)).toFixed(1)}` + bottom;
  }
  return `<path d="${top}${bottom}Z"/>`;
}

const handles = ['top', 'b1', 'b2', 'b3', 'fi', 'fo'].map((k) => `<i class="knob ${k}"></i>`).join('');

document.getElementById('trackList').innerHTML = tracks.map(([name], i) => {
  const n = i + 1;
  const state = (n >= 9 && n <= 16 ? ' linked' : '') + (n === 13 ? ' selected' : '');
  return `<li class="track${state}"><div class="num">${icon('wave')}<span>${n}</span></div><div class="edge"></div>
    <div class="strip"><div class="ms"><button>M</button><button>S</button></div><div class="name">${name}</div>
    <div class="acts"><span><button class="arm" aria-label="Record enable">${icon('dot')}</button><button aria-label="Monitor">${icon('mon')}</button></span><button aria-label="Edit channel">${icon('edit')}</button></div></div>
    <div class="meter">${n === 13 ? '<i></i><i></i>' : ''}</div></li>`;
}).join('');

document.getElementById('clipLanes').innerHTML = tracks.map(([, label, color, shape], i) =>
  `<div class="lane"><div class="clip ${color}"><svg viewBox="0 0 684 28" preserveAspectRatio="none">${wavePath(shape, 0, i * 31)}${wavePath(shape, 1, i * 57 + 7)}</svg><span class="label">${label}</span>${color.includes('picked') ? handles : ''}</div></div>`
).join('') + `<div class="gridlines">${'<i></i>'.repeat(20)}</div>`;

document.getElementById('timeRuler').innerHTML = Array.from({ length: 20 }, (_, i) => `<span>${i * 4 + 1}</span>`).join('')
  + '<i class="corner"></i><i class="corner r"></i>';
```
